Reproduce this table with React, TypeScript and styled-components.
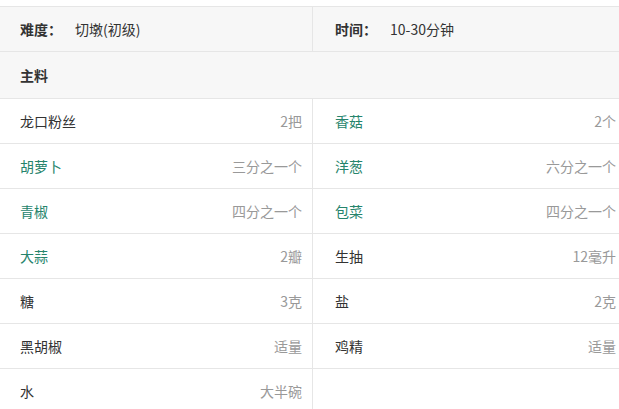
import React from 'react';
import styled, { createGlobalStyle } from 'styled-components';

const GlobalStyle = createGlobalStyle`
  html, body {
    margin: 0;
    padding: 0;
    background: #fff;
    overflow: hidden;
  }
  body {
    font-family: "Noto Sans CJK SC", "Liberation Sans", sans-serif;
    font-size: 14px;
    color: #333;
  }
`;

const Page = styled.div`
  padding-top: 6px;
`;

const Table = styled.div`
  width: 628px;
  margin-left: -2px;
  border-top: 1px solid #e6e6e6;
`;

const Row = styled.div<{ $shaded?: boolean; $tall?: boolean }>`
  display: grid;
  grid-template-columns: 314px 314px;
  height: ${({ $tall }) => ($tall ? '46px' : '44px')};
  border-bottom: 1px solid #e6e6e6;
  background: ${({ $shaded }) => ($shaded ? '#f7f7f7' : '#fff')};
`;

const Cell = styled.div<{ $wide?: boolean }>`
  display: flex;
  align-items: center;
  justify-content: space-between;
  padding: 0 10px 0 22px;
  grid-column: ${({ $wide }) => ($wide ? '1 / span 2' : 'auto')};
  & + & {
    border-left: 1px solid #e6e6e6;
  }
`;

const Label = styled.span`
  font-weight: bold;
  margin-right: 13px;
`;

const SectionTitle = styled.span`
  font-weight: bold;
`;

const Name = styled.span<{ $link?: boolean }>`
  color: ${({ $link }) => ($link ? '#26846c' : '#333')};
`;

const Amount = styled.span`
  color: #999;
`;

type Item = { name: string; amount: string; link?: boolean };

const items: Item[] = [
  { name: '龙口粉丝', amount: '2把' },
  { name: '香菇', amount: '2个', link: true },
  { name: '胡萝卜', amount: '三分之一个', link: true },
  { name: '洋葱', amount: '六分之一个', link: true },
  { name: '青椒', amount: '四分之一个', link: true },
  { name: '包菜', amount: '四分之一个', link: true },
  { name: '大蒜', amount: '2瓣', link: true },
  { name: '生抽', amount: '12毫升' },
  { name: '糖', amount: '3克' },
  { name: '盐', amount: '2克' },
  { name: '黑胡椒', amount: '适量' },
  { name: '鸡精', amount: '适量' },
  { name: '水', amount: '大半碗' },
];

const pairs: Item[][] = [];
for (let i = 0; i < items.length; i += 2) pairs.push(items.slice(i, i + 2));

const App: React.FC = () => (
  <>
    <GlobalStyle />
    <Page>
      <Table>
        <Row $shaded>
          <Cell>
            <span>
              <Label>难度：</Label>切墩(初级)
            </span>
          </Cell>
          <Cell>
            <span>
              <Label>时间：</Label>10-30分钟
            </span>
          </Cell>
        </Row>
        <Row $shaded $tall>
          <Cell $wide>
            <SectionTitle>主料</SectionTitle>
          </Cell>
        </Row>
        {pairs.map((pair, i) => (
          <Row key={i}>
            {pair.map(item => (
              <Cell key={item.name}>
                <Name $link={item.link}>{item.name}</Name>
                <Amount>{item.amount}</Amount>
              </Cell>
            ))}
            {pair.length === 1 && <Cell />}
          </Row>
        ))}
      </Table>
    </Page>
  </>
);

export default App;
